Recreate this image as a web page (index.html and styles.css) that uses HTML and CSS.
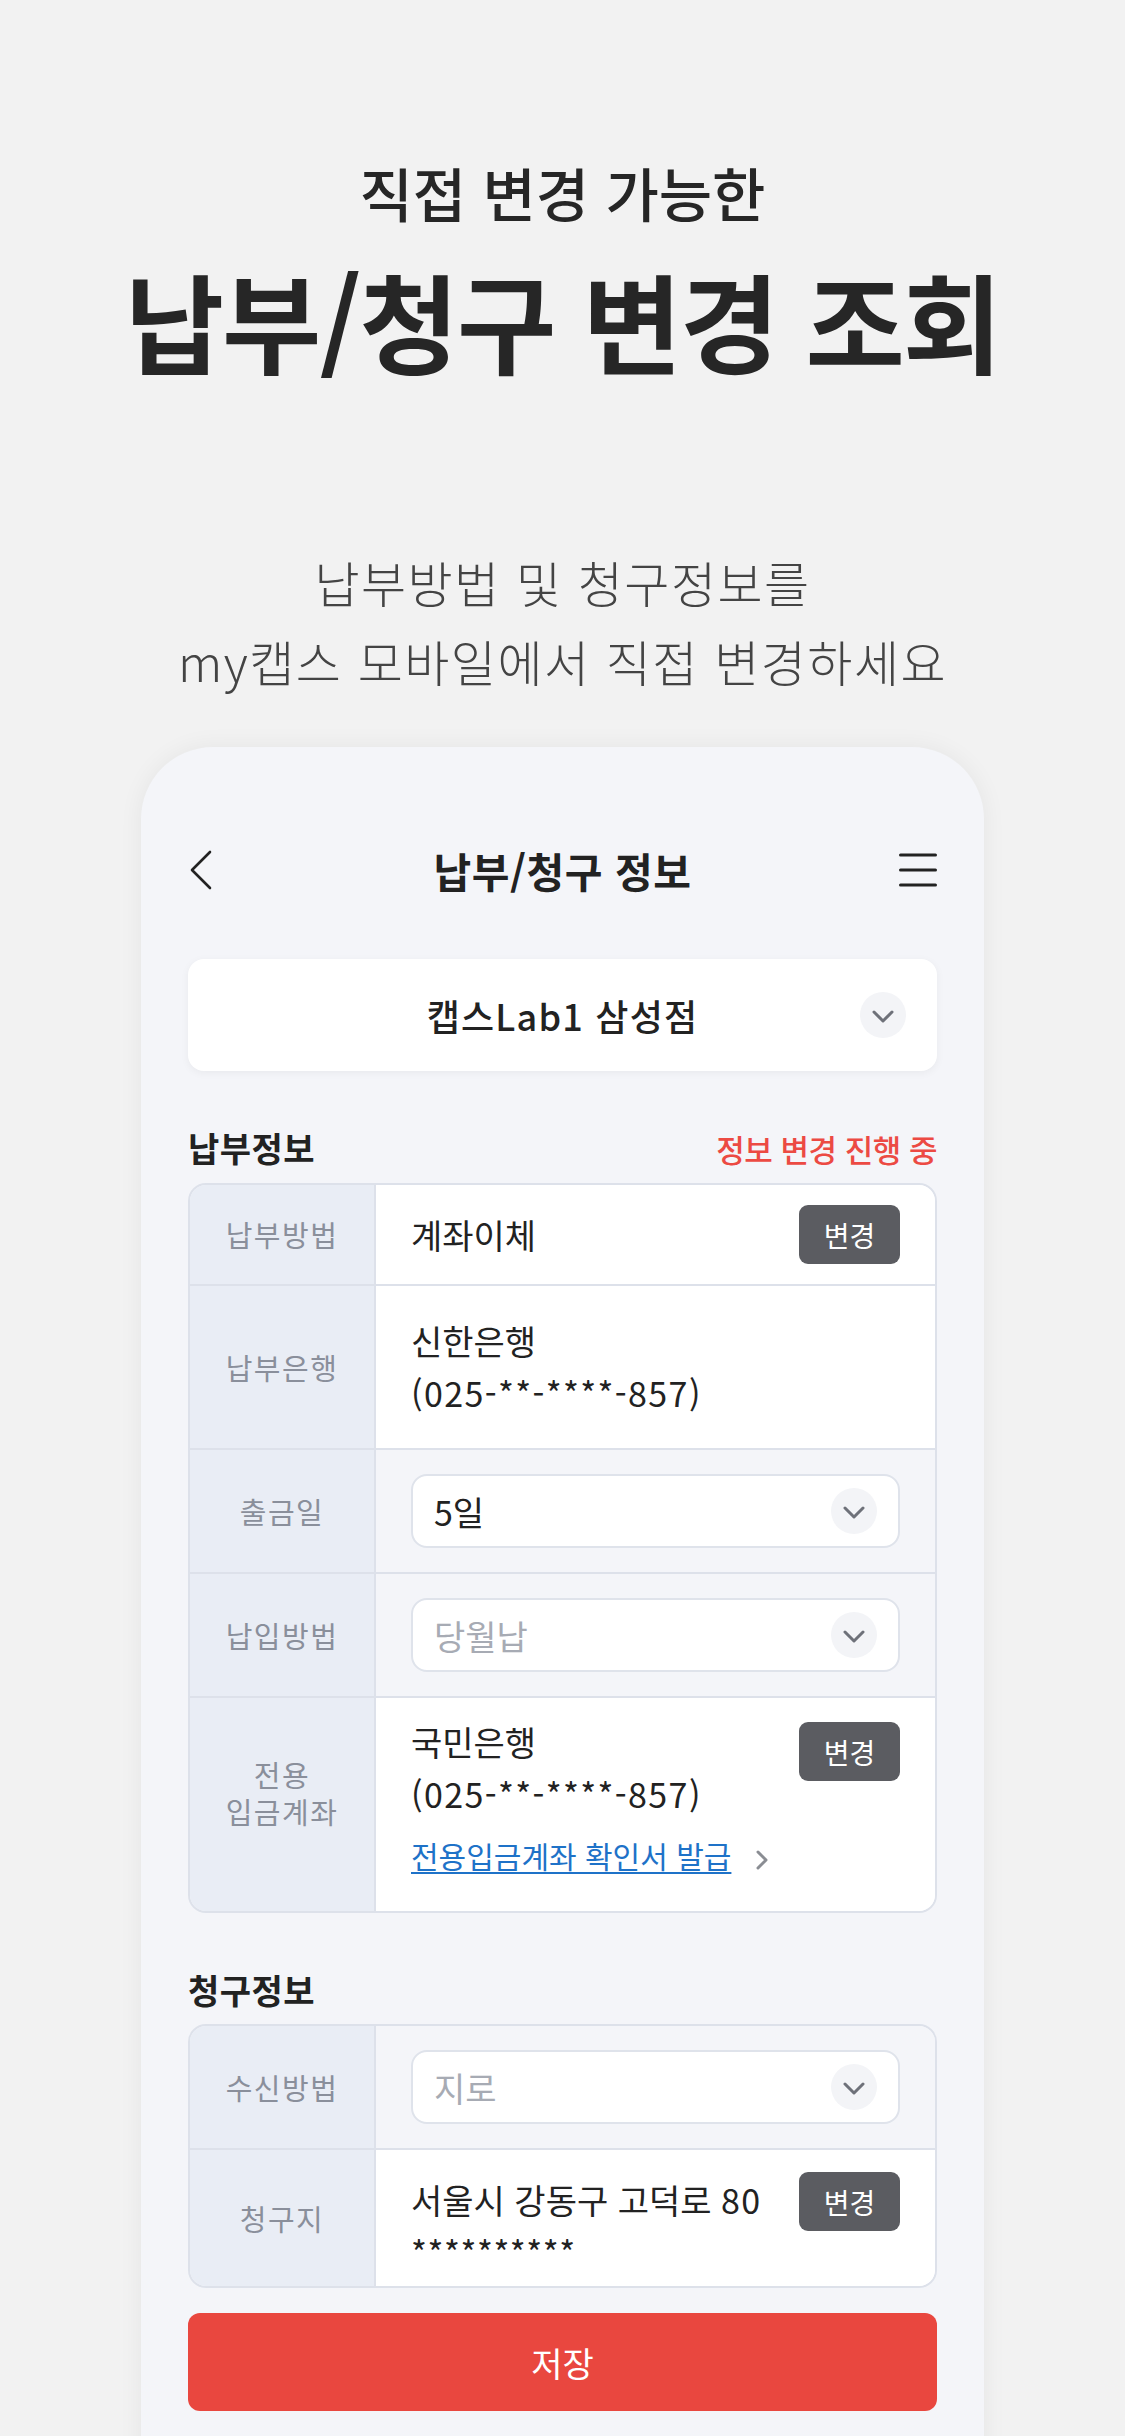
FILE: index.html
```html
<!DOCTYPE html>
<html lang="ko">
  <head>
    <meta charset="utf-8">
    <title>납부/청구 변경 조회</title>
    <link rel="stylesheet" href="styles.css">
  </head>

  <body>
    <header class="promo">
      <p class="promo-eyebrow">직접 변경 가능한</p>
      <h1 class="promo-title">납부/청구 변경 조회</h1>
      <p class="promo-lead">납부방법 및 청구정보를<br>my캡스 모바일에서 직접 변경하세요</p>
    </header>

    <main class="phone">
      <div class="topbar">
        <svg class="topbar-back" width="24" height="40" viewBox="0 0 24 40">
          <polyline points="21,2 3,20 21,38" fill="none" stroke="#222" stroke-width="2.6" stroke-linecap="round" stroke-linejoin="round" />
        </svg>
        <div class="topbar-title">납부/청구 정보</div>
        <svg class="topbar-menu" width="38" height="36" viewBox="0 0 38 36">
          <line x1="1.5" y1="3" x2="36.5" y2="3" stroke="#222" stroke-width="3" stroke-linecap="round" />
          <line x1="1.5" y1="18" x2="36.5" y2="18" stroke="#222" stroke-width="3" stroke-linecap="round" />
          <line x1="1.5" y1="33" x2="36.5" y2="33" stroke="#222" stroke-width="3" stroke-linecap="round" />
        </svg>
      </div>

      <div class="store-select">
        <span class="store-name">캡스Lab1 삼성점</span>
        <span class="chev-circle">
          <svg width="22" height="13" viewBox="0 0 22 13"><polyline points="2,2 11,11 20,2" fill="none" stroke="#6e7179" stroke-width="3" stroke-linecap="round" stroke-linejoin="round" /></svg>
        </span>
      </div>

      <div class="section-head">
        <h2 class="section-title">납부정보</h2>
        <span class="section-status">정보 변경 진행 중</span>
      </div>

      <div class="info-table">
        <div class="info-row">
          <div class="info-label">납부방법</div>
          <div class="info-value info-value--center">
            <div class="value-text">계좌이체</div>
            <button class="btn-change">변경</button>
          </div>
        </div>
        <div class="info-row info-row--tall">
          <div class="info-label">납부은행</div>
          <div class="info-value info-value--center">
            <div class="value-text">신한은행<br><span class="num">(025-**-****-857)</span></div>
          </div>
        </div>
        <div class="info-row">
          <div class="info-label">출금일</div>
          <div class="info-value info-value--select">
            <div class="select-box">
              <span>5일</span>
              <span class="chev-circle">
                <svg width="22" height="13" viewBox="0 0 22 13"><polyline points="2,2 11,11 20,2" fill="none" stroke="#6e7179" stroke-width="3" stroke-linecap="round" stroke-linejoin="round" /></svg>
              </span>
            </div>
          </div>
        </div>
        <div class="info-row">
          <div class="info-label">납입방법</div>
          <div class="info-value info-value--select">
            <div class="select-box select-box--empty">
              <span>당월납</span>
              <span class="chev-circle">
                <svg width="22" height="13" viewBox="0 0 22 13"><polyline points="2,2 11,11 20,2" fill="none" stroke="#6e7179" stroke-width="3" stroke-linecap="round" stroke-linejoin="round" /></svg>
              </span>
            </div>
          </div>
        </div>
        <div class="info-row">
          <div class="info-label info-label--lifted">전용<br>입금계좌</div>
          <div class="info-value info-value--account">
            <div class="value-text">
              국민은행<br><span class="num">(025-**-****-857)</span><br>
              <a class="value-link" href="#">전용입금계좌 확인서 발급</a><span class="link-arrow">
                <svg width="14" height="22" viewBox="0 0 14 22"><polyline points="3,3 11,11 3,19" fill="none" stroke="#8a8d93" stroke-width="3" stroke-linecap="round" stroke-linejoin="round" /></svg>
              </span>
            </div>
            <button class="btn-change btn-change--top">변경</button>
          </div>
        </div>
      </div>

      <div class="section-head">
        <h2 class="section-title">청구정보</h2>
      </div>

      <div class="info-table">
        <div class="info-row">
          <div class="info-label">수신방법</div>
          <div class="info-value info-value--select">
            <div class="select-box select-box--empty">
              <span>지로</span>
              <span class="chev-circle">
                <svg width="22" height="13" viewBox="0 0 22 13"><polyline points="2,2 11,11 20,2" fill="none" stroke="#6e7179" stroke-width="3" stroke-linecap="round" stroke-linejoin="round" /></svg>
              </span>
            </div>
          </div>
        </div>
        <div class="info-row">
          <div class="info-label">청구지</div>
          <div class="info-value info-value--address">
            <div class="value-text">서울시 강동구 고덕로 <span class="num">80</span><br><span class="mask">**********</span></div>
            <button class="btn-change btn-change--top">변경</button>
          </div>
        </div>
      </div>

      <button class="btn-save">저장</button>
    </main>
  </body>
</html>
```

FILE: styles.css
```css
body {
  margin: 0;
  background: #f2f2f2;
  font-family: "Noto Sans CJK KR", "Noto Sans", sans-serif;
  color: #222;
  overflow: hidden;
}

/* promo heading */
.promo {
  padding-top: 156px;
  text-align: center;
}
.promo-eyebrow {
  margin: 0;
  font-size: 58px;
  line-height: 72px;
  font-weight: 500;
  color: #262626;
}
.promo-title {
  margin: 29px 0 0;
  font-size: 108px;
  line-height: 124px;
  font-weight: 700;
  letter-spacing: -2px;
  color: #262626;
}
.promo-lead {
  margin: 161px 0 0;
  font-size: 49px;
  line-height: 79px;
  font-weight: 300;
  letter-spacing: 1.5px;
  color: #444;
}

/* phone mock */
.phone {
  width: 843px;
  margin: 47px auto 0;
  padding: 88px 47px 80px;
  box-sizing: border-box;
  background: #f4f5f9;
  border-radius: 72px 72px 0 0;
  box-shadow: 0 0 24px rgba(0, 0, 0, 0.06);
}

.topbar {
  display: grid;
  grid-template-columns: 1fr auto 1fr;
  align-items: center;
  height: 70px;
}
.topbar-back {
  margin-left: 1px;
}
.topbar-title {
  font-size: 41px;
  font-weight: 700;
  letter-spacing: 0.5px;
}
.topbar-menu {
  justify-self: end;
}

.store-select {
  display: grid;
  grid-template-columns: 1fr auto 1fr;
  align-items: center;
  height: 112px;
  margin-top: 54px;
  padding: 0 31px;
  background: #fff;
  border-radius: 16px;
  box-shadow: 0 2px 8px rgba(0, 0, 0, 0.05);
}
.store-name {
  grid-column: 2;
  font-size: 36px;
  font-weight: 500;
  letter-spacing: 1.2px;
}
.store-select .chev-circle {
  grid-column: 3;
  justify-self: end;
}

.chev-circle {
  display: flex;
  align-items: center;
  justify-content: center;
  width: 46px;
  height: 46px;
  border-radius: 50%;
  background: #f3f4f7;
}
.chev-circle svg {
  margin-top: 2px;
}

.section-head {
  display: flex;
  justify-content: space-between;
  align-items: baseline;
  margin: 55px 0 12px;
}
.section-title {
  margin: 0;
  font-size: 34px;
  line-height: 44px;
  font-weight: 700;
  letter-spacing: 0.5px;
}
.section-status {
  font-size: 31px;
  line-height: 44px;
  font-weight: 500;
  letter-spacing: -0.5px;
  color: #ec4a43;
}

/* table */
.info-table {
  border: 2px solid #dde1ea;
  border-radius: 18px;
  overflow: hidden;
}
.info-row {
  display: flex;
}
.info-row + .info-row {
  border-top: 2px solid #dde1ea;
}
.info-label {
  display: flex;
  align-items: center;
  justify-content: center;
  flex: 0 0 184px;
  border-right: 2px solid #dde1ea;
  background: #e9edf5;
  font-size: 29px;
  line-height: 37px;
  letter-spacing: 1.5px;
  color: #8a8f9b;
  text-align: center;
}
.info-label--lifted {
  padding-bottom: 24px;
}
.info-value {
  flex: 1;
  display: flex;
  justify-content: space-between;
  padding: 20px 35px;
  background: #fff;
}
.info-value--center {
  align-items: center;
  min-height: 59px;
}
.info-row--tall .info-value {
  padding: 29px 35px;
}
.info-value--select {
  padding: 24px 35px;
  background: #f4f5f9;
}
.info-value--account {
  align-items: flex-start;
  padding: 18px 35px 28px;
}
.info-value--address {
  align-items: flex-start;
  padding: 24px 35px 8px;
}

.value-text {
  font-size: 34px;
  line-height: 52px;
  color: #222;
}
.num {
  letter-spacing: 1.4px;
}
.mask {
  letter-spacing: 0.6px;
}

.value-link {
  display: inline-block;
  margin-top: 15px;
  font-size: 30px;
  line-height: 40px;
  color: #1e72c8;
  text-decoration: underline;
  text-underline-offset: 4px;
  text-decoration-thickness: 2px;
}
.link-arrow {
  margin-left: 14px;
  vertical-align: -3px;
}

.btn-change {
  flex: 0 0 auto;
  width: 101px;
  height: 59px;
  border: 0;
  border-radius: 9px;
  background: #5b5c61;
  color: #fff;
  font-family: inherit;
  font-size: 28px;
}
.btn-change--top {
  margin-top: 6px;
}
.info-value--address .btn-change--top {
  margin-top: -2px;
}

.select-box {
  flex: 1;
  display: flex;
  align-items: center;
  justify-content: space-between;
  height: 70px;
  padding: 0 21px;
  border: 2px solid #dfe3eb;
  border-radius: 16px;
  background: #fff;
  font-size: 34px;
  color: #222;
}
.select-box--empty {
  color: #a7abb4;
}

.btn-save {
  display: block;
  width: 100%;
  height: 98px;
  margin-top: 25px;
  border: 0;
  border-radius: 12px;
  background: #e9473f;
  color: #fff;
  font-family: inherit;
  font-size: 34px;
}
```
